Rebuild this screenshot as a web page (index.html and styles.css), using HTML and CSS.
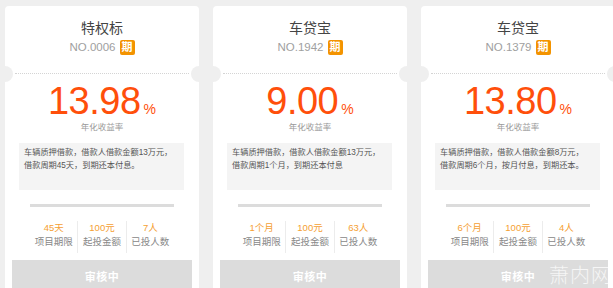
FILE: index.html
```html
<!DOCTYPE html>
<html lang="zh-CN">
<head>
    <meta charset="UTF-8">
    <meta name="viewport" content="width=device-width, initial-scale=1.0">
    <title>理财产品</title>
    <link rel="stylesheet" href="styles.css">
</head>
<body>
    <div class="product-list">
        <div class="product-card">
            <div class="card-head">
                <h3 class="product-title">特权标</h3>
                <p class="product-no">NO.0006 <span class="tag">期</span></p>
            </div>
            <div class="card-body">
                <div class="rate"><span class="rate-num">13.98</span><span class="rate-pct">%</span></div>
                <p class="rate-label">年化收益率</p>
                <div class="desc">车辆质押借款，借款人借款金额13万元，借款周期45天，到期还本付息。</div>
                <div class="bar"></div>
                <div class="stats">
                    <div class="stat"><span class="stat-val">45天</span><span class="stat-name">项目期限</span></div>
                    <div class="stat"><span class="stat-val">100元</span><span class="stat-name">起投金额</span></div>
                    <div class="stat"><span class="stat-val">7人</span><span class="stat-name">已投人数</span></div>
                </div>
                <button class="status-btn">审核中</button>
            </div>
        </div>

        <div class="product-card">
            <div class="card-head">
                <h3 class="product-title">车贷宝</h3>
                <p class="product-no">NO.1942 <span class="tag">期</span></p>
            </div>
            <div class="card-body">
                <div class="rate"><span class="rate-num">9.00</span><span class="rate-pct">%</span></div>
                <p class="rate-label">年化收益率</p>
                <div class="desc">车辆质押借款，借款人借款金额13万元，借款周期1个月，到期还本付息</div>
                <div class="bar"></div>
                <div class="stats">
                    <div class="stat"><span class="stat-val">1个月</span><span class="stat-name">项目期限</span></div>
                    <div class="stat"><span class="stat-val">100元</span><span class="stat-name">起投金额</span></div>
                    <div class="stat"><span class="stat-val">63人</span><span class="stat-name">已投人数</span></div>
                </div>
                <button class="status-btn">审核中</button>
            </div>
        </div>

        <div class="product-card">
            <div class="card-head">
                <h3 class="product-title">车贷宝</h3>
                <p class="product-no">NO.1379 <span class="tag">期</span></p>
            </div>
            <div class="card-body">
                <div class="rate"><span class="rate-num">13.80</span><span class="rate-pct">%</span></div>
                <p class="rate-label">年化收益率</p>
                <div class="desc">车辆质押借款，借款人借款金额8万元，借款周期6个月，按月付息，到期还本。</div>
                <div class="bar"></div>
                <div class="stats">
                    <div class="stat"><span class="stat-val">6个月</span><span class="stat-name">项目期限</span></div>
                    <div class="stat"><span class="stat-val">100元</span><span class="stat-name">起投金额</span></div>
                    <div class="stat"><span class="stat-val">4人</span><span class="stat-name">已投人数</span></div>
                </div>
                <button class="status-btn">审核中</button>
            </div>
        </div>
    </div>

    <div class="watermark">萧内网</div>
</body>
</html>
```

FILE: styles.css
```css
* {
    margin: 0;
    padding: 0;
    box-sizing: border-box;
}

html, body {
    overflow: hidden;
}

body {
    font-family: "Liberation Sans", "Noto Sans CJK SC", sans-serif;
    background: #efefef;
    height: 288px;
    position: relative;
}

.product-list {
    display: flex;
    gap: 14px;
    padding: 6px 0 0 5px;
    width: 640px;
}

.product-card {
    flex: 0 0 194px;
    background: #fff;
    border-radius: 4px 4px 0 0;
    height: 282px;
    overflow: hidden;
    position: relative;
}

/* top part with the title and the ticket notches */
.card-head {
    height: 68px;
    padding-top: 12px;
    text-align: center;
    border-bottom: 1px dotted #d4d4d4;
    margin: 0 10px;
}

.product-card::before,
.product-card::after {
    content: "";
    position: absolute;
    top: 60px;
    width: 16px;
    height: 16px;
    border-radius: 50%;
    background: #efefef;
}

.product-card::before {
    left: -8px;
}

.product-card::after {
    right: -8px;
}

.product-title {
    font-size: 14px;
    font-weight: 400;
    color: #444;
    line-height: 20px;
    height: 21px;
}

.product-no {
    font-size: 11.5px;
    color: #a0a0a0;
    line-height: 16px;
    display: flex;
    justify-content: center;
    align-items: center;
    gap: 4px;
}

.tag {
    display: inline-block;
    width: 15px;
    height: 15px;
    line-height: 15px;
    border-radius: 2px;
    background: #f39300;
    color: #fff;
    font-size: 11px;
    font-weight: 700;
    text-align: center;
}

.card-body {
    text-align: center;
    padding-top: 8px;
}

.rate {
    color: #ff4f0b;
    line-height: 38px;
    height: 38px;
}

.rate-num {
    font-size: 38px;
    letter-spacing: -0.5px;
}

.rate-pct {
    font-size: 14px;
    margin-left: 3px;
}

.rate-label {
    font-size: 8.5px;
    color: #9a9a9a;
    line-height: 12px;
    margin-top: 1px;
}

.desc {
    margin: 10px 15px 0 14px;
    height: 47px;
    padding: 3px 10px 0 5px;
    background: #f4f4f4;
    font-size: 8.2px;
    line-height: 13px;
    color: #555;
    text-align: left;
}

.bar {
    height: 3px;
    background: #dcdcdc;
    margin: 14px 25px 0;
}

.stats {
    display: flex;
    margin: 14px 25px 0;
}

.stat {
    flex: 1;
    display: flex;
    flex-direction: column;
    align-items: center;
    border-left: 1px solid #ececec;
    padding: 0 0 4px;
}

.stat:first-child {
    border-left: none;
}

.stat-val {
    font-size: 9.5px;
    color: #f5a033;
    line-height: 14px;
}

.stat-name {
    font-size: 9.5px;
    color: #888;
    line-height: 14px;
}

.status-btn {
    display: block;
    width: 180px;
    height: 32px;
    margin: 7px auto 0;
    border: none;
    background: #dcdcdc;
    color: #fff;
    font-family: "Liberation Sans", "Noto Sans CJK SC", sans-serif;
    font-size: 11px;
    font-weight: 700;
    letter-spacing: 0.5px;
}

.watermark {
    position: absolute;
    left: 549px;
    top: 260px;
    font-family: "Noto Sans CJK SC", sans-serif;
    font-size: 20px;
    font-weight: 300;
    letter-spacing: 1px;
    color: rgba(255, 255, 255, 0.75);
    white-space: nowrap;
}
```
